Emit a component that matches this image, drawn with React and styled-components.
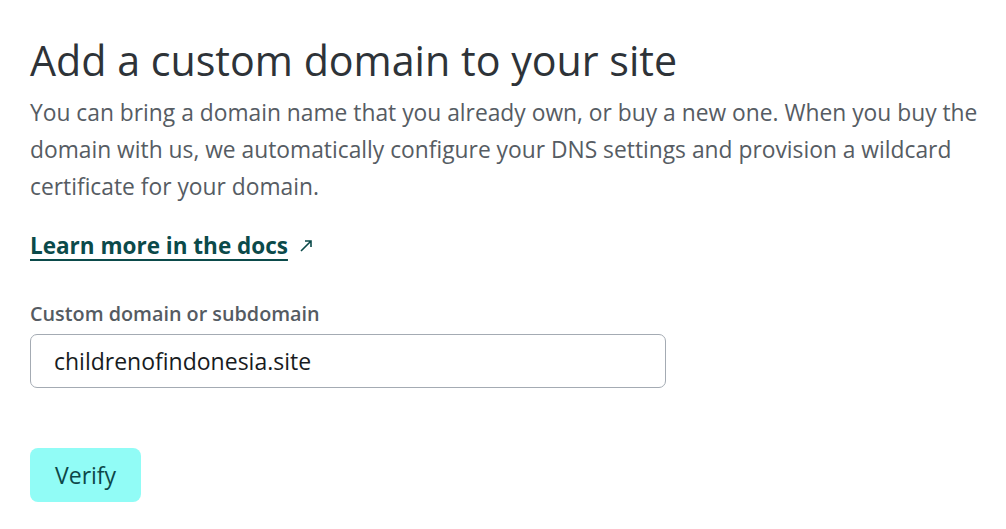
import React, { useState } from "react";
import styled, { createGlobalStyle } from "styled-components";

const GlobalStyle = createGlobalStyle`
	body {
		margin: 0;
		background: #ffffff;
		font-family: "Open Sans", "Noto Sans", sans-serif;
	}
`;

const Page = styled.div`
	padding: 30px 16px 0 30px;
	display: flex;
	flex-direction: column;
	align-items: flex-start;
`;

const Title = styled.h1`
	margin: 0;
	font-size: 41.2px;
	line-height: 60px;
	font-weight: 400;
	color: #2e3338;
`;

const Intro = styled.p`
	margin: 4px 0 0 0;
	font-size: 22.8px;
	line-height: 37px;
	color: #565c63;
	max-width: 958px;
`;

const DocsLink = styled.a`
	margin-top: 25px;
	display: flex;
	align-items: center;
	gap: 11px;
	font-size: 22.5px;
	font-weight: 700;
	color: #0b4a4a;
	text-decoration: underline;
	text-decoration-thickness: 2px;
	text-underline-offset: 5px;
	cursor: pointer;
`;

const Label = styled.label`
	margin-top: 39px;
	font-size: 19.8px;
	font-weight: 600;
	color: #555b62;
`;

const Input = styled.input`
	margin-top: 7px;
	box-sizing: border-box;
	width: 636px;
	height: 54px;
	padding: 0 23px;
	border: 1px solid #a4abb3;
	border-radius: 7px;
	font-family: inherit;
	font-size: 23px;
	color: #181b1e;
	outline: none;
`;

const Button = styled.button`
	margin-top: 60px;
	padding: 0 25px;
	height: 54px;
	border: none;
	border-radius: 8px;
	background: #91fcf6;
	color: #0d4748;
	font-family: inherit;
	font-size: 23px;
	font-weight: 500;
	cursor: pointer;
`;

function ArrowIcon() {
	return (
		<svg width="14" height="14" viewBox="0 0 14 14" fill="none">
			<path d="M2 12 L12 2 M6 2 H12 V8" stroke="#0b4a4a" strokeWidth="1.6" />
		</svg>
	);
}

export default function App() {
	const [domain, setDomain] = useState("childrenofindonesia.site");

	return (
		<>
			<GlobalStyle />
			<Page>
				<Title>Add a custom domain to your site</Title>
				<Intro>
					You can bring a domain name that you already own, or buy a new one. When you buy the
					domain with us, we automatically configure your DNS settings and provision a wildcard
					certificate for your domain.
				</Intro>
				<DocsLink>
					Learn more in the docs
					<ArrowIcon />
				</DocsLink>
				<Label htmlFor="domain">Custom domain or subdomain</Label>
				<Input
					id="domain"
					value={domain}
					onChange={(e) => setDomain(e.target.value)}
				/>
				<Button>Verify</Button>
			</Page>
		</>
	);
}
